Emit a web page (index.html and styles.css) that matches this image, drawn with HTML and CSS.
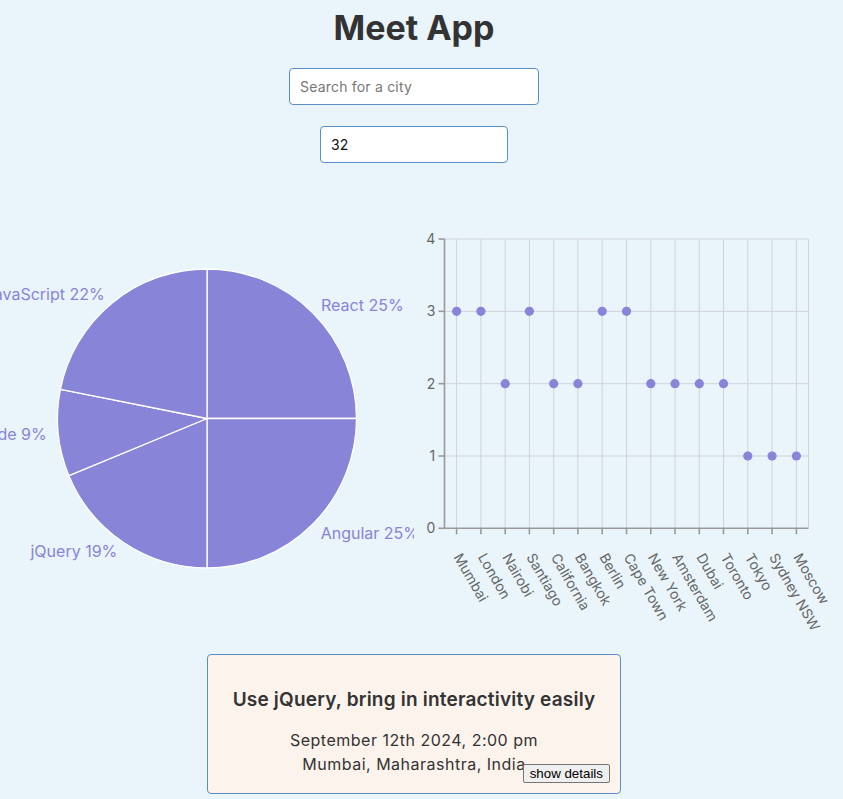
FILE: index.html
```html
<!DOCTYPE html>
<html lang="en">
<head>
<meta charset="utf-8">
<title>Meet App</title>
<link rel="stylesheet" href="styles.css">
</head>
<body>
<div class="app">
  <h1 class="title">Meet App</h1>
  <div class="city-search">
    <input class="city" type="text" placeholder="Search for a city">
  </div>
  <div class="number-of-events">
    <input class="number" type="number" value="32">
  </div>
  <div class="charts">
    <svg class="pie" width="414" height="400" viewBox="0 0 414 400">
      <g class="slices" fill="#8884d8" stroke="#ffffff" stroke-width="1.3">
        <path d="M207 199.5 L207 50 A149.5 149.5 0 0 1 356.5 199.5 Z"/>
        <path d="M207 199.5 L356.5 199.5 A149.5 149.5 0 0 1 207 349 Z"/>
        <path d="M207 199.5 L207 349 A149.5 149.5 0 0 1 68.9 256.7 Z"/>
        <path d="M207 199.5 L68.9 256.7 A149.5 149.5 0 0 1 60.4 170.3 Z"/>
        <path d="M207 199.5 L60.4 170.3 A149.5 149.5 0 0 1 207 50 Z"/>
      </g>
      <g class="pie-labels">
        <text x="321" y="92">React 25%</text>
        <text x="320.7" y="319.5">Angular 25%</text>
        <text x="117.3" y="338" text-anchor="end">jQuery 19%</text>
        <text x="46.7" y="221" text-anchor="end">Node 9%</text>
        <text x="104.7" y="81" text-anchor="end">JavaScript 22%</text>
      </g>
    </svg>
    <svg class="scatter" width="414" height="400" viewBox="0 0 414 400">
      <g class="grid" stroke="#cfd3d8" stroke-width="1">
        <line x1="30.5" y1="20" x2="394.5" y2="20"/>
        <line x1="30.5" y1="92.33" x2="394.5" y2="92.33"/>
        <line x1="30.5" y1="164.67" x2="394.5" y2="164.67"/>
        <line x1="30.5" y1="237" x2="394.5" y2="237"/>
        <line x1="42.6" y1="20" x2="42.6" y2="309.3"/>
        <line x1="66.9" y1="20" x2="66.9" y2="309.3"/>
        <line x1="91.2" y1="20" x2="91.2" y2="309.3"/>
        <line x1="115.4" y1="20" x2="115.4" y2="309.3"/>
        <line x1="139.7" y1="20" x2="139.7" y2="309.3"/>
        <line x1="163.9" y1="20" x2="163.9" y2="309.3"/>
        <line x1="188.2" y1="20" x2="188.2" y2="309.3"/>
        <line x1="212.5" y1="20" x2="212.5" y2="309.3"/>
        <line x1="236.8" y1="20" x2="236.8" y2="309.3"/>
        <line x1="261.0" y1="20" x2="261.0" y2="309.3"/>
        <line x1="285.3" y1="20" x2="285.3" y2="309.3"/>
        <line x1="309.5" y1="20" x2="309.5" y2="309.3"/>
        <line x1="333.8" y1="20" x2="333.8" y2="309.3"/>
        <line x1="358.1" y1="20" x2="358.1" y2="309.3"/>
        <line x1="382.4" y1="20" x2="382.4" y2="309.3"/>
        <line x1="394.5" y1="20" x2="394.5" y2="309.3"/>
      </g>
      <g class="axis" stroke="#999999" stroke-width="1.6">
        <line x1="30.5" y1="20" x2="30.5" y2="309.3"/>
        <line x1="30.5" y1="309.3" x2="394.5" y2="309.3"/>
        <line x1="24.5" y1="20" x2="30.5" y2="20"/>
        <line x1="24.5" y1="92.33" x2="30.5" y2="92.33"/>
        <line x1="24.5" y1="164.67" x2="30.5" y2="164.67"/>
        <line x1="24.5" y1="237" x2="30.5" y2="237"/>
        <line x1="24.5" y1="309.3" x2="30.5" y2="309.3"/>
        <line x1="42.6" y1="309.3" x2="42.6" y2="315.3"/>
        <line x1="66.9" y1="309.3" x2="66.9" y2="315.3"/>
        <line x1="91.2" y1="309.3" x2="91.2" y2="315.3"/>
        <line x1="115.4" y1="309.3" x2="115.4" y2="315.3"/>
        <line x1="139.7" y1="309.3" x2="139.7" y2="315.3"/>
        <line x1="163.9" y1="309.3" x2="163.9" y2="315.3"/>
        <line x1="188.2" y1="309.3" x2="188.2" y2="315.3"/>
        <line x1="212.5" y1="309.3" x2="212.5" y2="315.3"/>
        <line x1="236.8" y1="309.3" x2="236.8" y2="315.3"/>
        <line x1="261.0" y1="309.3" x2="261.0" y2="315.3"/>
        <line x1="285.3" y1="309.3" x2="285.3" y2="315.3"/>
        <line x1="309.5" y1="309.3" x2="309.5" y2="315.3"/>
        <line x1="333.8" y1="309.3" x2="333.8" y2="315.3"/>
        <line x1="358.1" y1="309.3" x2="358.1" y2="315.3"/>
        <line x1="382.4" y1="309.3" x2="382.4" y2="315.3"/>
      </g>
      <g class="y-ticks" text-anchor="end">
        <text x="21.3" y="20" dy="0.36em">4</text>
        <text x="21.3" y="92.33" dy="0.36em">3</text>
        <text x="21.3" y="164.67" dy="0.36em">2</text>
        <text x="21.3" y="237" dy="0.36em">1</text>
        <text x="21.3" y="309.3" dy="0.36em">0</text>
      </g>
      <g class="x-ticks">
        <text transform="translate(39.3 338) rotate(60)">Mumbai</text>
        <text transform="translate(63.6 338) rotate(60)">London</text>
        <text transform="translate(87.9 338) rotate(60)">Nairobi</text>
        <text transform="translate(112.1 338) rotate(60)">Santiago</text>
        <text transform="translate(136.4 338) rotate(60)">California</text>
        <text transform="translate(160.6 338) rotate(60)">Bangkok</text>
        <text transform="translate(184.9 338) rotate(60)">Berlin</text>
        <text transform="translate(209.2 338) rotate(60)">Cape Town</text>
        <text transform="translate(233.5 338) rotate(60)">New York</text>
        <text transform="translate(257.7 338) rotate(60)">Amsterdam</text>
        <text transform="translate(282.0 338) rotate(60)">Dubai</text>
        <text transform="translate(306.2 338) rotate(60)">Toronto</text>
        <text transform="translate(330.5 338) rotate(60)">Tokyo</text>
        <text transform="translate(354.8 338) rotate(60)">Sydney NSW</text>
        <text transform="translate(379.1 338) rotate(60)">Moscow</text>
      </g>
      <g class="dots" fill="#8884d8">
        <circle cx="42.6" cy="92.33" r="4.6"/>
        <circle cx="66.9" cy="92.33" r="4.6"/>
        <circle cx="91.2" cy="164.67" r="4.6"/>
        <circle cx="115.4" cy="92.33" r="4.6"/>
        <circle cx="139.7" cy="164.67" r="4.6"/>
        <circle cx="163.9" cy="164.67" r="4.6"/>
        <circle cx="188.2" cy="92.33" r="4.6"/>
        <circle cx="212.5" cy="92.33" r="4.6"/>
        <circle cx="236.8" cy="164.67" r="4.6"/>
        <circle cx="261.0" cy="164.67" r="4.6"/>
        <circle cx="285.3" cy="164.67" r="4.6"/>
        <circle cx="309.5" cy="164.67" r="4.6"/>
        <circle cx="333.8" cy="237" r="4.6"/>
        <circle cx="358.1" cy="237" r="4.6"/>
        <circle cx="382.4" cy="237" r="4.6"/>
      </g>
    </svg>
  </div>
  <ul class="event-list">
    <li class="event">
      <h2 class="event-title">Use jQuery, bring in interactivity easily</h2>
      <p class="event-time">September 12th 2024, 2:00 pm</p>
      <p class="event-location">Mumbai, Maharashtra, India</p>
      <button class="details-btn" type="button">show details</button>
    </li>
  </ul>
</div>
</body>
</html>
```

FILE: styles.css
```css
html, body {
  margin: 0;
  padding: 0;
}

body {
  background: #eaf4fb;
  color: #333333;
  font-family: Inter, "Open Sans", sans-serif;
  overflow: hidden;
}

.app {
  width: 828px;
  display: flex;
  flex-direction: column;
  align-items: center;
}

.title {
  margin: 6px 0 0;
  font-size: 34px;
  line-height: 44px;
  font-weight: 700;
  color: #333333;
}

.city-search {
  margin-top: 18px;
}

.city,
.number {
  box-sizing: border-box;
  height: 37px;
  border: 1px solid #5a8fcb;
  border-radius: 4px;
  background: #ffffff;
  font-family: Inter, "Open Sans", sans-serif;
  font-size: 14px;
  color: #111111;
  padding: 0 10px;
  outline: none;
}

.city {
  width: 250px;
  letter-spacing: 0.2px;
}

.city::placeholder {
  color: #777777;
}

.number-of-events {
  margin-top: 21px;
}

.number {
  width: 188px;
  -moz-appearance: textfield;
}

.number::-webkit-inner-spin-button,
.number::-webkit-outer-spin-button {
  -webkit-appearance: none;
  margin: 0;
}

.charts {
  margin-top: 56px;
  width: 828px;
  display: flex;
}

.pie,
.scatter {
  display: block;
  flex: none;
}

.scatter {
  overflow: visible;
}

.pie-labels text {
  fill: #8884d8;
  font-size: 16px;
}

.y-ticks text,
.x-ticks text {
  fill: #666666;
  font-size: 14px;
}

.event-list {
  list-style: none;
  margin: 35px 0 0;
  padding: 0;
}

.event {
  position: relative;
  box-sizing: border-box;
  width: 414px;
  height: 140px;
  background: #fbf3ec;
  border: 1px solid #5a8fcb;
  border-radius: 4px;
  text-align: center;
  padding-top: 33px;
}

.event-title {
  margin: 0;
  font-size: 19px;
  line-height: 24px;
  font-weight: 600;
  letter-spacing: 0.2px;
  color: #333333;
}

.event-time,
.event-location {
  margin: 0;
  font-size: 16px;
  line-height: 24px;
  letter-spacing: 0.5px;
  color: #333333;
}

.event-time {
  margin-top: 16px;
}

.details-btn {
  position: absolute;
  right: 10px;
  bottom: 10px;
  font-family: "Liberation Sans", Arial, sans-serif;
  font-size: 13.33px;
  letter-spacing: 0;
  padding: 1px 6px;
  background: #efefef;
  border: 1px solid #767676;
  border-radius: 2px;
  color: #000000;
}
```
